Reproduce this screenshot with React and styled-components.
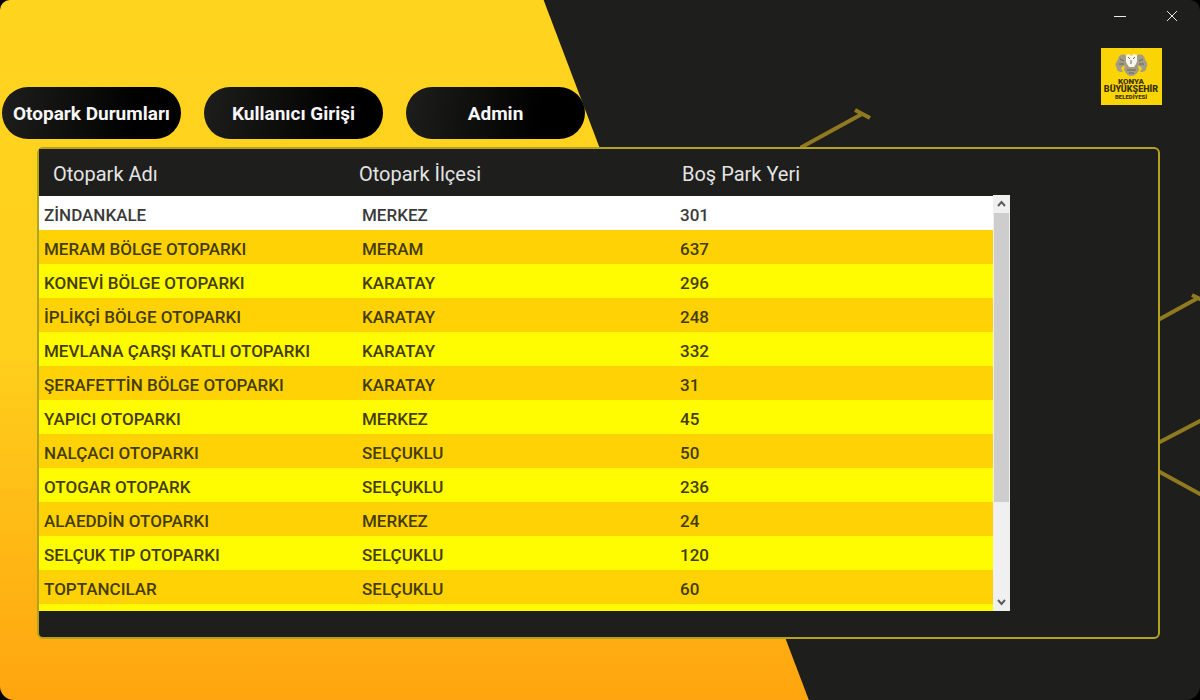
import React from "react";
import styled, { createGlobalStyle, css } from "styled-components";

const GlobalStyle = createGlobalStyle`
  *, *::before, *::after { box-sizing: border-box; }
  html, body { margin: 0; background: #000; }
  body { font-family: Roboto, "Liberation Sans", sans-serif; }
  button { font: inherit; border: 0; cursor: pointer; }
`;

const Window = styled.div`
  position: relative;
  isolation: isolate;
  display: flex;
  flex-direction: column;
  min-height: 100vh;
  overflow: hidden;
  border-radius: 10px 10px 14px 14px;
  background: #1e1e1c;
`;

const Slope = styled.div`
  position: absolute;
  inset: 0;
  z-index: -1;
  background: linear-gradient(#ffd41f, #ffd01c 50%, #ffa50f);
  clip-path: polygon(0 0, 45.3% 0, 67.4% 100%, 0 100%);
`;

const Circuit = styled.svg`
  position: absolute;
  top: 0;
  right: 0;
  z-index: -1;
  width: 400px;
  height: 700px;
  fill: none;
  stroke: #8f7a20;
  stroke-width: 4;
`;

const TitleBar = styled.div`
  display: flex;
  justify-content: flex-end;
  height: 32px;
  padding-right: 2px;
`;

const WindowButton = styled.button`
  display: grid;
  place-items: center;
  width: 52px;
  padding: 0;
  background: transparent;
  svg { width: 12px; height: 12px; stroke: #ececec; stroke-width: 1; fill: none; }
`;

const Header = styled.header`
  display: flex;
  justify-content: space-between;
  align-items: flex-start;
  padding: 16px 38px 8px 2px;
`;

const Nav = styled.nav`
  display: flex;
  gap: 23px;
  padding-top: 39px;
`;

const NavButton = styled.button`
  width: 179px;
  height: 52px;
  padding: 0;
  border-radius: 26px;
  background: linear-gradient(100deg, #1e1e1c, #000 75%);
  color: #f6f6f6;
  font-size: 19px;
  font-weight: 700;
  white-space: nowrap;
`;

const Logo = styled.svg`
  width: 61px;
  height: 57px;
  background: #fbd405;
  text { font-weight: 900; fill: #3c3200; text-anchor: middle; }
`;

const Panel = styled.main`
  margin: 0 40px 61px 37px;
  padding: 0 148px 26px 0;
  border: 2px solid #b3a31c;
  border-radius: 6px;
  background: #1e1e1c;
`;

const ListArea = styled.div`
  display: flex;
  align-items: flex-start;
  height: 462px;
  overflow: hidden;
`;

const Viewport = styled.div`
  flex: 1;
  height: 100%;
  overflow: hidden;
  background: #fffb00;
`;

const Table = styled.table`
  width: 100%;
  table-layout: fixed;
  border-collapse: collapse;
  text-align: left;
`;

const HeadCell = styled.th`
  height: 47px;
  padding: 3px 0 0 ${(p) => p.$indent}px;
  background: #1e1e1c;
  color: #e4e4e4;
  font-size: 20px;
  font-weight: 400;
`;

const rowColors = {
  selected: css`background: #fff;`,
  amber: css`background: #ffd205;`,
  yellow: css`background: #fffb00;`,
};

const Row = styled.tr`
  ${(p) => rowColors[p.$tone]}
`;

const Cell = styled.td`
  height: 34px;
  padding: 4px 0 0 5px;
  color: ${(p) => (p.$selected ? "#3a3a3a" : "#453c00")};
  font-size: 17px;
  font-weight: 500;
  line-height: 20px;
  white-space: nowrap;
`;

const Scrollbar = styled.div`
  display: flex;
  flex-direction: column;
  width: 17px;
  height: 416px;
  margin-top: 46px;
  background: #f0f0f0;
`;

const ScrollButton = styled.button`
  display: grid;
  place-items: center;
  height: 18px;
  padding: 0;
  background: #f0f0f0;
  svg { width: 9px; height: 8px; fill: none; stroke: #5c5c5c; stroke-width: 2; }
`;

const Track = styled.div`
  flex: 1;
  padding: 0 1px;
`;

const Thumb = styled.div`
  height: 76%;
  background: #cdcdcd;
`;

const lots = [
  ["ZİNDANKALE", "MERKEZ", 301],
  ["MERAM BÖLGE OTOPARKI", "MERAM", 637],
  ["KONEVİ BÖLGE OTOPARKI", "KARATAY", 296],
  ["İPLİKÇİ BÖLGE OTOPARKI", "KARATAY", 248],
  ["MEVLANA ÇARŞI KATLI OTOPARKI", "KARATAY", 332],
  ["ŞERAFETTİN BÖLGE OTOPARKI", "KARATAY", 31],
  ["YAPICI OTOPARKI", "MERKEZ", 45],
  ["NALÇACI OTOPARKI", "SELÇUKLU", 50],
  ["OTOGAR OTOPARK", "SELÇUKLU", 236],
  ["ALAEDDİN OTOPARKI", "MERKEZ", 24],
  ["SELÇUK TIP OTOPARKI", "SELÇUKLU", 120],
  ["TOPTANCILAR", "SELÇUKLU", 60],
];

const tone = (i) => (i === 0 ? "selected" : i % 2 ? "amber" : "yellow");

function MunicipalityLogo() {
  return (
    <Logo viewBox="0 0 61 57" role="img" aria-label="Konya Büyükşehir Belediyesi">
      <g fill="#a39d88">
        <path d="M26 8C22 5 17 7 17 12C14 15 14 18 16 20C15 22 17 24 22 24L20 20C22 18 24 17 26 18Z" />
        <path d="M35 8C39 5 44 7 44 12C47 15 47 18 45 20C46 22 44 24 39 24L41 20C39 18 37 17 35 18Z" />
        <path d="M24 17H37L38 22Q35 28 30 28Q26 28 23 22Z" />
      </g>
      <path d="M25 7L28 6L30 8L33 6L36 7L36 14L33 19H28L25 14Z" fill="#f7f5ee" />
      <path
        d="M19 11L23 13M18 16L23 16M42 11L38 13M43 16L38 16M27 9L29 11M34 9L32 11M26 22L35 22M28 25L33 25M30 12L30 16"
        stroke="#6b654f"
        fill="none"
      />
      <text x="30" y="36" fontSize="8">KONYA</text>
      <text x="30" y="44" fontSize="9">BÜYÜKŞEHİR</text>
      <text x="30" y="51" fontSize="6">BELEDİYESİ</text>
    </Logo>
  );
}

export default function App() {
  return (
    <>
      <GlobalStyle />
      <Window>
        <Slope />
        <Circuit viewBox="0 0 400 700" aria-hidden="true">
          <path d="M0 148L62 114M55 110L70 118M358 320L398 298M392 295L402 300M358 443L402 420M358 471L402 495" />
        </Circuit>
        <TitleBar>
          <WindowButton aria-label="Simge durumuna küçült">
            <svg viewBox="0 0 12 12"><path d="M0 6.5H12" /></svg>
          </WindowButton>
          <WindowButton aria-label="Kapat">
            <svg viewBox="0 0 12 12"><path d="M1 1L11 11M11 1L1 11" /></svg>
          </WindowButton>
        </TitleBar>
        <Header>
          <Nav>
            <NavButton>Otopark Durumları</NavButton>
            <NavButton>Kullanıcı Girişi</NavButton>
            <NavButton>Admin</NavButton>
          </Nav>
          <MunicipalityLogo />
        </Header>
        <Panel>
          <ListArea>
            <Viewport>
              <Table>
                <thead>
                  <tr>
                    <HeadCell $indent={14}>Otopark Adı</HeadCell>
                    <HeadCell $indent={2}>Otopark İlçesi</HeadCell>
                    <HeadCell $indent={7}>Boş Park Yeri</HeadCell>
                  </tr>
                </thead>
                <tbody>
                  {lots.map((lot, i) => (
                    <Row key={lot[0]} $tone={tone(i)}>
                      {lot.map((value) => (
                        <Cell key={value} $selected={i === 0}>{value}</Cell>
                      ))}
                    </Row>
                  ))}
                </tbody>
              </Table>
            </Viewport>
            <Scrollbar>
              <ScrollButton aria-label="Yukarı kaydır">
                <svg viewBox="0 0 9 8"><path d="M1 6L4.5 2L8 6" /></svg>
              </ScrollButton>
              <Track><Thumb /></Track>
              <ScrollButton aria-label="Aşağı kaydır">
                <svg viewBox="0 0 9 8"><path d="M1 2L4.5 6L8 2" /></svg>
              </ScrollButton>
            </Scrollbar>
          </ListArea>
        </Panel>
      </Window>
    </>
  );
}
